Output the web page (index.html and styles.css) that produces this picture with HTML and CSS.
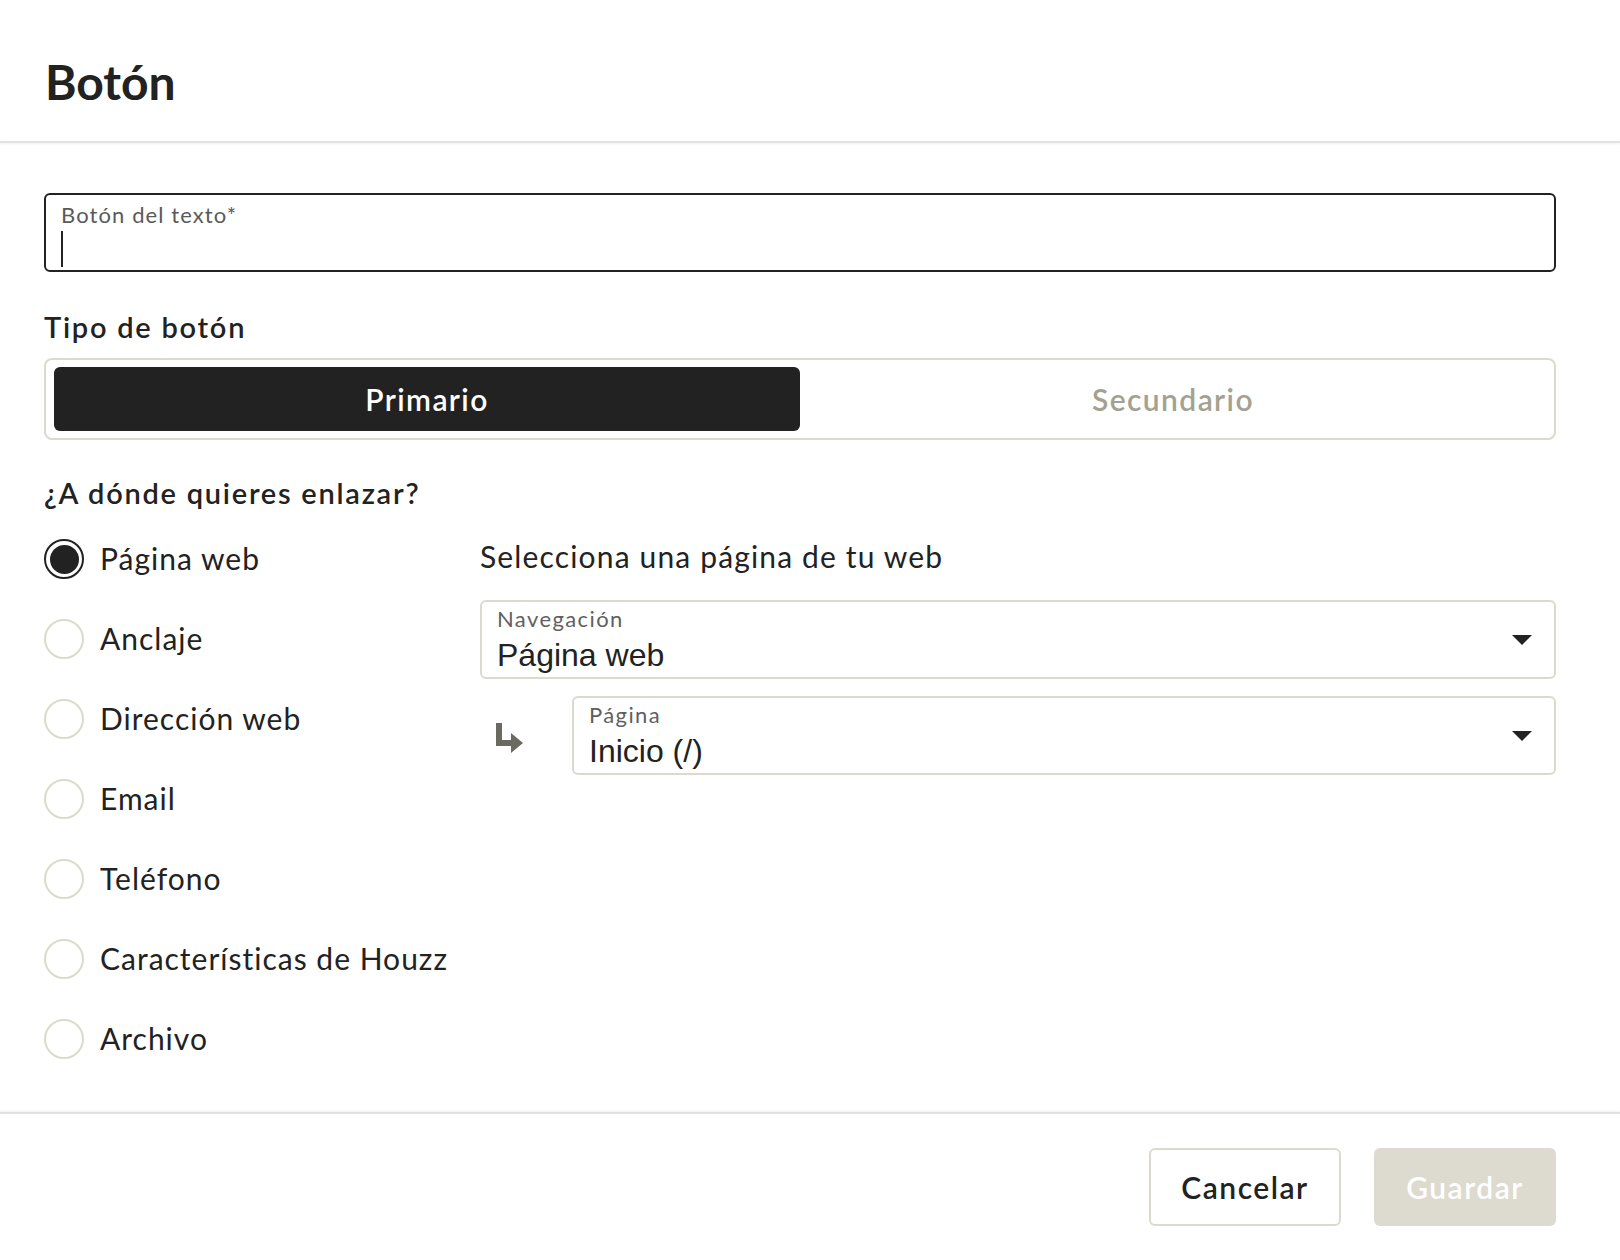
FILE: index.html
```html
<!DOCTYPE html>
<html lang="es">
<head>
<meta charset="utf-8">
<title>Botón</title>
<link rel="stylesheet" href="styles.css">
</head>
<body>
<div class="modal">
  <header class="head">
    <h1 class="title">Botón</h1>
  </header>
  <main class="content">
    <div class="field">
      <span class="field-label">Botón del texto*</span>
      <span class="cursor"></span>
    </div>
    <h2 class="section section-first">Tipo de botón</h2>
    <div class="seg">
      <div class="seg-opt on">Primario</div>
      <div class="seg-opt">Secundario</div>
    </div>
    <h2 class="section section-second">¿A dónde quieres enlazar?</h2>
    <div class="link">
      <ul class="radios">
        <li class="radio-row"><span class="radio on"></span>Página web</li>
        <li class="radio-row"><span class="radio"></span>Anclaje</li>
        <li class="radio-row"><span class="radio"></span>Dirección web</li>
        <li class="radio-row"><span class="radio"></span>Email</li>
        <li class="radio-row"><span class="radio"></span>Teléfono</li>
        <li class="radio-row"><span class="radio"></span>Características de Houzz</li>
        <li class="radio-row"><span class="radio"></span>Archivo</li>
      </ul>
      <div class="target">
        <p class="target-title">Selecciona una página de tu web</p>
        <div class="select">
          <div class="select-text">
            <span class="select-label">Navegación</span>
            <span class="select-value">Página web</span>
          </div>
          <svg class="caret" width="20" height="10" viewBox="0 0 20 10"><path d="M0 0H20L10 10Z" fill="#222"/></svg>
        </div>
        <div class="sub">
          <svg class="sub-arrow" width="28" height="30" viewBox="0 0 28 30"><path d="M0 0H6V17H15V10L27 20L15 30V23H0Z" fill="#6b6a60"/></svg>
          <div class="select select-sub">
            <div class="select-text">
              <span class="select-label">Página</span>
              <span class="select-value">Inicio (/)</span>
            </div>
            <svg class="caret" width="20" height="10" viewBox="0 0 20 10"><path d="M0 0H20L10 10Z" fill="#222"/></svg>
          </div>
        </div>
      </div>
    </div>
  </main>
  <footer class="foot">
    <button class="btn btn-ghost" type="button">Cancelar</button>
    <button class="btn btn-primary" type="button">Guardar</button>
  </footer>
</div>
</body>
</html>
```

FILE: styles.css
```css
* { box-sizing: border-box; }

body {
  margin: 0;
  background: #fff;
  color: #222;
  font-family: Lato, "Open Sans", sans-serif;
}

.modal {
  height: 1260px;
  display: flex;
  flex-direction: column;
}

.head {
  padding: 53px 44px 30px 45px;
  border-bottom: 2px solid #e2e2e2;
  box-shadow: 0 1px 2px rgba(0, 0, 0, 0.06);
}

.title {
  margin: 0;
  font-size: 48px;
  line-height: 58px;
  font-weight: 700;
}

.content {
  flex: 1;
  padding: 50px 64px 0 44px;
}

.field {
  height: 79px;
  border: 2px solid #222;
  border-radius: 6px;
  padding: 7px 15px 0;
}

.field-label {
  display: block;
  font-size: 22px;
  line-height: 26px;
  letter-spacing: 1.1px;
  color: #5a5a5a;
}

.cursor {
  display: block;
  width: 2px;
  height: 36px;
  margin-top: 3px;
  background: #222;
}

.section {
  margin: 0;
  font-size: 29px;
  line-height: 34px;
  font-weight: 600;
  letter-spacing: 1.75px;
}

.section-first { margin: 38px 0 14px; }
.section-second { margin: 36px 0 0; }

.seg {
  display: grid;
  grid-template-columns: 1fr 1fr;
  height: 82px;
  border: 2px solid #dcd9cf;
  border-radius: 8px;
  padding: 7px 8px;
}

.seg-opt {
  display: flex;
  align-items: center;
  justify-content: center;
  border-radius: 6px;
  font-size: 30px;
  font-weight: 600;
  letter-spacing: 1.4px;
  color: #a3a290;
}

.seg-opt.on {
  background: #222;
  color: #fff;
}

.link {
  display: grid;
  grid-template-columns: 436px 1fr;
  margin-top: 9px;
}

.radios {
  list-style: none;
  margin: 0;
  padding: 0;
}

.radio-row {
  height: 80px;
  display: flex;
  align-items: center;
  gap: 16px;
  font-size: 30px;
  line-height: 36px;
  padding-bottom: 2px;
  letter-spacing: 1px;
  color: #222;
}

.radio {
  flex: none;
  width: 40px;
  height: 40px;
  margin-top: 2px;
  border: 2px solid #dcd9cf;
  border-radius: 50%;
}

.radio.on {
  border: 2.5px solid #222;
  padding: 3.5px;
  background: #222;
  background-clip: content-box;
}

.target {
  padding-top: 17px;
}

.target-title {
  margin: 0;
  font-size: 30px;
  line-height: 40px;
  letter-spacing: 1.15px;
}

.select {
  margin-top: 24px;
  height: 79px;
  border: 2px solid #dcd9cf;
  border-radius: 6px;
  display: flex;
  align-items: center;
  padding: 0 22px 0 15px;
}

.select-text {
  flex: 1;
}

.select-label {
  display: block;
  font-size: 22px;
  line-height: 24px;
  letter-spacing: 1.4px;
  color: #5f5f5f;
}

.select-value {
  display: block;
  margin-top: 7px;
  font-family: "Liberation Sans", Arial, sans-serif;
  font-size: 32px;
  line-height: 34px;
  color: #222;
}

.caret { flex: none; }

.sub {
  display: flex;
  align-items: center;
  margin-top: 17px;
}

.sub-arrow {
  flex: none;
  margin-left: 16px;
  margin-top: 4px;
}

.select-sub {
  flex: 1;
  margin-top: 0;
  margin-left: 48px;
}

.foot {
  height: 148px;
  display: flex;
  justify-content: flex-end;
  gap: 33px;
  padding: 34px 64px 0 0;
  border-top: 2px solid #e2e2e2;
  box-shadow: 0 -1px 2px rgba(0, 0, 0, 0.06);
}

.btn {
  height: 78px;
  border-radius: 6px;
  font-family: inherit;
  font-size: 30px;
  font-weight: 600;
  letter-spacing: 1.5px;
  display: flex;
  align-items: center;
  justify-content: center;
  padding: 0;
  cursor: pointer;
}

.btn-ghost {
  width: 192px;
  border: 2px solid #dcd9cf;
  background: #fff;
  color: #222;
}

.btn-primary {
  width: 182px;
  border: none;
  background: #dddad0;
  color: #fff;
}
```
